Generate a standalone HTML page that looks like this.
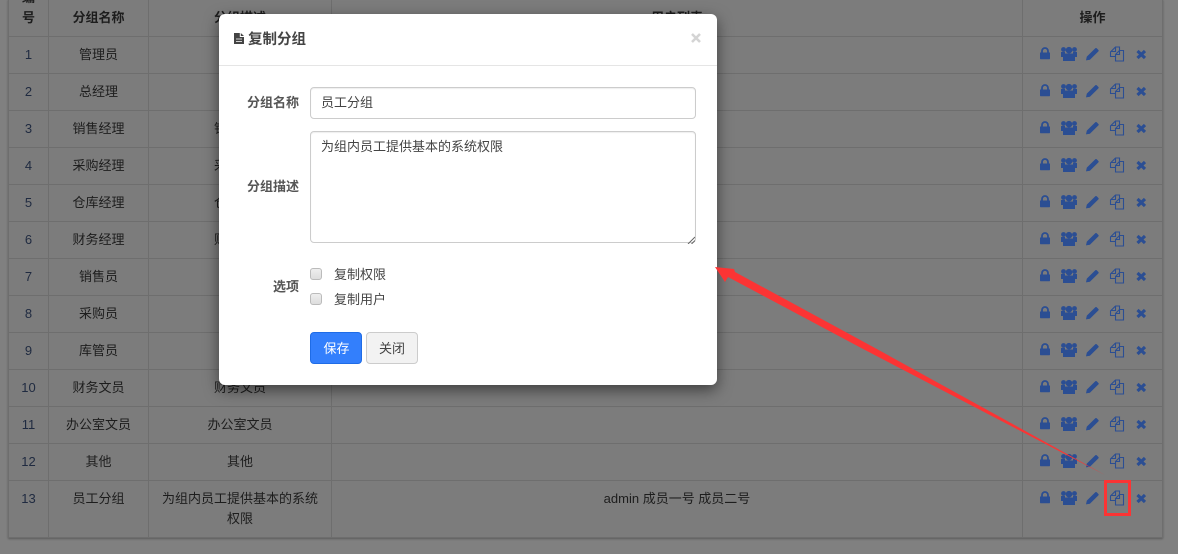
<!DOCTYPE html>
<html lang="zh-CN">
<head>
<meta charset="utf-8">
<title>复制分组</title>
<style>
html,body{margin:0;padding:0}
body{width:1178px;height:554px;overflow:hidden;position:relative;background:#808080;font:13px/20px "Liberation Sans","WenQuanYi Zen Hei","Noto Sans CJK SC",sans-serif;color:#1d1d1d}
table{position:absolute;left:8px;top:-1px;width:1155px;border-collapse:collapse;table-layout:fixed;background:#7c7c7c;box-shadow:0 1px 2px rgba(0,0,0,.3)}
th,td{border:1px solid #6e6e6e;text-align:center;padding:0 8px;height:36px;box-sizing:border-box;vertical-align:middle;font-weight:400}
th{font-weight:bold;padding-top:0}
tr.h th{height:37px;overflow:visible}
tr.r td{height:37px}
tr.l td{height:57px;vertical-align:top;padding-top:8px;line-height:20px}
td.n{color:#1f2a40}
.two{position:relative;top:-20px;display:block;line-height:20px;height:20px}
svg.ic{position:absolute;left:1038px;width:110px;height:16px;overflow:visible}
.modal{position:absolute;left:219px;top:14px;width:498px;height:371px;background:#fff;border-radius:6px;box-shadow:0 5px 15px rgba(0,0,0,.5);color:#333}
.mh{position:absolute;left:0;top:0;right:0;height:51px;border-bottom:1px solid #e5e5e5}
.mt{position:absolute;left:29px;top:16px;font-size:14.5px;line-height:20px;font-weight:bold;color:#444}
.x{position:absolute;left:468px;top:17px;width:18px;height:14px}
.lb{position:absolute;font-weight:bold;color:#555;width:80px;text-align:right;left:0;line-height:20px}
.inp{position:absolute;left:91px;width:386px;box-sizing:border-box;border:1px solid #ccc;border-radius:4px;background:#fff;color:#444;padding:5px 10px;line-height:20px;box-shadow:inset 0 1px 1px rgba(0,0,0,.07)}
.ck{position:absolute;left:91px;width:12px;height:12px;box-sizing:border-box;border:1px solid #bbb;border-radius:3px;background:linear-gradient(#eee,#ddd)}
.cl{position:absolute;left:115px;line-height:20px;color:#444}
.b{position:absolute;top:318px;height:32px;box-sizing:border-box;border-radius:4px;text-align:center;line-height:31px}
.b1{left:91px;width:52px;background:#337ffc;border:1px solid #1f6ce6;color:#fff;padding-left:1px}
.b2{left:147px;width:52px;background:#f2f2f2;border:1px solid #ccc;color:#444}
.rz{position:absolute;left:468px;top:222px;width:8px;height:8px}
.red{position:absolute;left:1104px;top:480px;width:27px;height:36px;box-sizing:border-box;border:3px solid #fb3434}
svg.ar{position:absolute;left:0;top:0;width:1178px;height:554px;pointer-events:none}
</style>
</head>
<body>
<svg width="0" height="0" style="position:absolute">
<defs>
<g id="icons" fill="#2b4e93">
<path d="M2 6.500h10v6a.8.8 0 0 1-.8.8H2.800a.8.8 0 0 1-.8-.8z"/>
<path d="M4 7V5a3 3 0 0 1 6 0v2" fill="none" stroke="#2b4e93" stroke-width="1.800"/>
<circle cx="31" cy="4.200" r="3.300"/><circle cx="25.500" cy="3.500" r="2.400"/><circle cx="36.500" cy="3.500" r="2.400"/>
<path d="M27 7.500h8a2 2 0 0 1 2 2V15H25V9.500a2 2 0 0 1 2-2z"/>
<path d="M23 6h4v5h-4zM35 6h4v5h-4z"/>
<path d="M48 14.400l.8-3.800 8.500-8.300a1 1 0 0 1 1.400 0l1.700 1.700a1 1 0 0 1 0 1.400l-8.500 8.300z"/>
<g fill="none" stroke="#2b4e93" stroke-width="1.100">
<path d="M77 10.500H72.500V6L77.500 1H81.500V4.500"/>
<path d="M77.500 1V5.500H72.500"/>
<path d="M77.500 15V8.500L81.500 4.500H85.500V15z"/>
<path d="M81.500 4.500V8.500H77.500"/>
</g>
<path d="M99.500 5l7.500 7M107 5l-7.500 7" fill="none" stroke="#2b4e93" stroke-width="3.200"/>
</g>
</defs>
</svg>

<table>
<colgroup><col style="width:40px"><col style="width:100px"><col style="width:183px"><col style="width:691px"><col style="width:140px"></colgroup>
<tr class="h"><th><span class="two">编</span><span style="position:relative;top:-20px;display:block;height:0">号</span></th><th>分组名称</th><th>分组描述</th><th>用户列表</th><th>操作</th></tr>
<tr class="r"><td class="n">1</td><td>管理员</td><td>管理员</td><td></td><td></td></tr>
<tr class="r"><td class="n">2</td><td>总经理</td><td>总经理</td><td></td><td></td></tr>
<tr class="r"><td class="n">3</td><td>销售经理</td><td>销售经理</td><td></td><td></td></tr>
<tr class="r"><td class="n">4</td><td>采购经理</td><td>采购经理</td><td></td><td></td></tr>
<tr class="r"><td class="n">5</td><td>仓库经理</td><td>仓库经理</td><td></td><td></td></tr>
<tr class="r"><td class="n">6</td><td>财务经理</td><td>财务经理</td><td></td><td></td></tr>
<tr class="r"><td class="n">7</td><td>销售员</td><td>销售员</td><td></td><td></td></tr>
<tr class="r"><td class="n">8</td><td>采购员</td><td>采购员</td><td></td><td></td></tr>
<tr class="r"><td class="n">9</td><td>库管员</td><td>库管员</td><td></td><td></td></tr>
<tr class="r"><td class="n">10</td><td>财务文员</td><td>财务文员</td><td></td><td></td></tr>
<tr class="r"><td class="n">11</td><td>办公室文员</td><td>办公室文员</td><td></td><td></td></tr>
<tr class="r"><td class="n">12</td><td>其他</td><td>其他</td><td></td><td></td></tr>
<tr class="l"><td class="n">13</td><td>员工分组</td><td>为组内员工提供基本的系统权限</td><td>admin 成员一号 成员二号</td><td></td></tr>
</table>

<svg class="ic" style="top:46px" viewBox="0 0 110 16"><use href="#icons"/></svg>
<svg class="ic" style="top:83px" viewBox="0 0 110 16"><use href="#icons"/></svg>
<svg class="ic" style="top:120px" viewBox="0 0 110 16"><use href="#icons"/></svg>
<svg class="ic" style="top:157px" viewBox="0 0 110 16"><use href="#icons"/></svg>
<svg class="ic" style="top:194px" viewBox="0 0 110 16"><use href="#icons"/></svg>
<svg class="ic" style="top:231px" viewBox="0 0 110 16"><use href="#icons"/></svg>
<svg class="ic" style="top:268px" viewBox="0 0 110 16"><use href="#icons"/></svg>
<svg class="ic" style="top:305px" viewBox="0 0 110 16"><use href="#icons"/></svg>
<svg class="ic" style="top:342px" viewBox="0 0 110 16"><use href="#icons"/></svg>
<svg class="ic" style="top:379px" viewBox="0 0 110 16"><use href="#icons"/></svg>
<svg class="ic" style="top:416px" viewBox="0 0 110 16"><use href="#icons"/></svg>
<svg class="ic" style="top:453px" viewBox="0 0 110 16"><use href="#icons"/></svg>
<svg class="ic" style="top:490px" viewBox="0 0 110 16"><use href="#icons"/></svg>

<div class="modal">
  <div class="mh">
    <svg style="position:absolute;left:15px;top:19px" width="10" height="11" viewBox="0 0 10 11"><path d="M0 0h5.800v4H10v7H0z M6.800 0L10 3H6.800z" fill="#444"/><path d="M2 6h6M2 8.500h6" stroke="#fff" stroke-width=".8"/></svg>
    <div class="mt">复制分组</div>
    <svg class="x" viewBox="0 0 18 14"><path d="M5 3l8 8M13 3l-8 8" stroke="#d4d4d4" stroke-width="2.600" fill="none"/></svg>
  </div>
  <div class="lb" style="top:79px">分组名称</div>
  <div class="inp" style="top:73px;height:32px">员工分组</div>
  <div class="lb" style="top:163px">分组描述</div>
  <div class="inp" style="top:117px;height:112px;padding-top:5px">为组内员工提供基本的系统权限</div>
  <svg class="rz" viewBox="0 0 8 8"><path d="M1 8L8 1M4.500 8L8 4.500" stroke="#666" stroke-width="1" fill="none"/></svg>
  <div class="lb" style="top:263px">选项</div>
  <div class="ck" style="top:254px"></div>
  <div class="cl" style="top:251px">复制权限</div>
  <div class="ck" style="top:279px"></div>
  <div class="cl" style="top:276px">复制用户</div>
  <div class="b b1">保存</div>
  <div class="b b2">关闭</div>
</div>

<svg class="ar" viewBox="0 0 1178 554">
<polygon fill="#fb3434" points="715,267 734,269 735,272 875,348 1105,475 865,350 728,277 725,282"/>
</svg>
<div class="red"></div>
</body>
</html>
